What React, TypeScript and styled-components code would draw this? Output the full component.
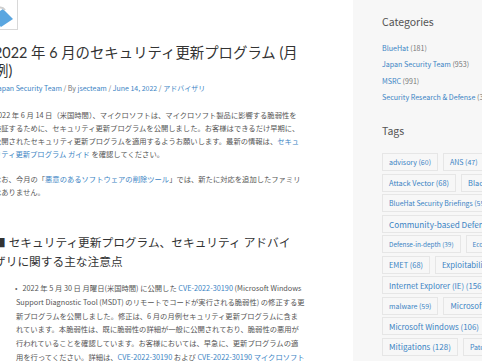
import styled, { createGlobalStyle } from "styled-components";

const GlobalStyle = createGlobalStyle`
  html, body {
    margin: 0;
    padding: 0;
    background: #fff;
    overflow: hidden;
  }
  body {
    font-family: "Noto Sans CJK JP", "Noto Sans", sans-serif;
    color: #555;
  }
`;

const Page = styled.div`
  display: flex;
  width: 620px;
  height: 361px;
  margin-left: -6px;
`;

const Main = styled.main`
  flex: 0 0 307.5px;
  padding-right: 51.5px;
`;

const Thumb = styled.div`
  width: 40px;
  height: 38px;
  margin-top: -10px;
  margin-left: -18px;
  border: 1px solid #d8d8d8;
  background: #fff;
  display: flex;
  align-items: flex-end;
  justify-content: flex-end;
  overflow: hidden;
`;

const Title = styled.h1`
  margin: 14px 0 0;
  font-family: Lato, "Noto Sans CJK JP", sans-serif;
  font-size: 14.4px;
  line-height: 18px;
  font-weight: 400;
  color: #333;
`;

const Meta = styled.div`
  margin-top: 2px;
  font-size: 7px;
  line-height: 12px;
  color: #777;
`;

const A = styled.a`
  color: #3b84c4;
  text-decoration: none;
`;

const Para = styled.p<{ $gap: number }>`
  margin: ${(p) => p.$gap}px 0 0;
  font-size: 7.3px;
  line-height: 13px;
  color: #555;
`;

const Heading = styled.h2`
  margin: 34px 0 0;
  font-family: Lato, "Noto Sans CJK JP", sans-serif;
  font-size: 11.7px;
  line-height: 19px;
  font-weight: 400;
  color: #333;
`;

const List = styled.ul`
  margin: 11px -8px 0 22px;
  padding: 0;
  list-style: none;
  font-size: 7.3px;
  line-height: 13.8px;
  color: #555;
`;

const Item = styled.li`
  &::before {
    content: "•";
    display: inline-block;
    width: 7.5px;
    margin-left: -1px;
    color: #666;
  }
`;

const Side = styled.aside`
  flex: 1 0 auto;
  background: #f7f7f7;
  padding: 14px 29px;
`;

const SideTitle = styled.h3`
  margin: 0;
  font-size: 10.5px;
  line-height: 16px;
  font-weight: 400;
  color: #555;
`;

const CatList = styled.ul`
  list-style: none;
  margin: 10px 0 0;
  padding: 0;
  font-size: 7.1px;
  line-height: 16.3px;
  color: #777;
`;

const TagsTitle = styled(SideTitle)`
  margin-top: 18px;
`;

const TagCloud = styled.div`
  margin-top: 14px;
  display: flex;
  flex-direction: column;
  gap: 2.5px;
`;

const TagRow = styled.div`
  display: flex;
  gap: 5px;
  white-space: nowrap;
`;

const Tag = styled.a<{ $size: number }>`
  display: flex;
  align-items: center;
  height: 18px;
  padding: 0 6px;
  border: 1px solid #e6e6e6;
  box-sizing: border-box;
  color: #3b84c4;
  font-size: ${(p) => p.$size}px;
  text-decoration: none;
`;

const categories = [
  ["BlueHat", "181"],
  ["Japan Security Team", "953"],
  ["MSRC", "991"],
  ["Security Research & Defense", "372"],
];

const tagRows: [string, number][][] = [
  [["advisory (60)", 7], ["ANS (47)", 7], ["Application Compatibility (12)", 7]],
  [["Attack Vector (68)", 7.4], ["Black Hat (45)", 7.4]],
  [["BlueHat Security Briefings (55)", 6.9], ["Browser (30)", 7]],
  [["Community-based Defense (92)", 8.2], ["CVE (20)", 7]],
  [["Defense-in-depth (39)", 6.4], ["EcoStrat (10)", 6.4]],
  [["EMET (68)", 7.4], ["Exploitability (29)", 7.8]],
  [["Internet Explorer (IE) (156)", 7.8], ["JSRT (14)", 7]],
  [["malware (59)", 7], ["Microsoft Office (40)", 7.8]],
  [["Microsoft Windows (106)", 7.9], ["MMPC (28)", 7]],
  [["Mitigations (128)", 8], ["Patch Tuesday (45)", 7]],
];

export default function App() {
  return (
    <>
      <GlobalStyle />
      <Page>
        <Main>
          <Thumb>
            <svg width="30" height="32" viewBox="0 0 30 32">
              <path d="M4 20 L16 12 L26 22 L14 30 Z" fill="#5aa6e0" />
              <path d="M4 20 L14 30 L8 32 L2 26 Z" fill="#a9d3f2" />
              <path d="M6 16 C9 10 15 9 18 13" fill="none" stroke="#cfcfcf" strokeWidth="2" />
            </svg>
          </Thumb>
          <Title>2022 年 6 月のセキュリティ更新プログラム (月例)</Title>
          <Meta>
            <A href="#">Japan Security Team</A> / By <A href="#">jsecteam</A> /{" "}
            <A href="#">June 14, 2022</A> / <A href="#">アドバイザリ</A>
          </Meta>
          <Para $gap={15}>
            2022 年 6 月 14 日（米国時間）、マイクロソフトは、マイクロソフト製品に影響する脆弱性を検証するために、セキュリティ更新プログラムを公開しました。お客様はできるだけ早期に、公開されたセキュリティ更新プログラムを適用するようお願いします。最新の情報は、
            <A href="#">セキュリティ更新プログラム ガイド</A> を確認してください。
          </Para>
          <Para $gap={12}>
            なお、今月の「<A href="#">悪意のあるソフトウェアの削除ツール</A>」では、新たに対応を追加したファミリはありません。
          </Para>
          <Heading>■ セキュリティ更新プログラム、セキュリティ アドバイザリに関する主な注意点</Heading>
          <List>
            <Item>
              2022 年 5 月 30 日 月曜日(米国時間) に公開した <A href="#">CVE-2022-30190</A> (Microsoft Windows
              <br />
              Support Diagnostic Tool (MSDT) のリモートでコードが実行される脆弱性) の修正する更
              <br />
              新プログラムを公開しました。修正は、6 月の月例セキュリティ更新プログラムに含ま
              <br />
              れています。本脆弱性は、既に脆弱性の詳細が一般に公開されており、脆弱性の悪用が
              <br />
              行われていることを確認しています。お客様においては、早急に、更新プログラムの適
              <br />
              用を行ってください。詳細は、<A href="#">CVE-2022-30190</A> および{" "}
              <A href="#">CVE-2022-30190 マイクロソフト</A>
            </Item>
          </List>
        </Main>
        <Side>
          <SideTitle>Categories</SideTitle>
          <CatList>
            {categories.map(([name, count]) => (
              <li key={name}>
                <A href="#">{name}</A> ({count})
              </li>
            ))}
          </CatList>
          <TagsTitle>Tags</TagsTitle>
          <TagCloud>
            {tagRows.map((row, i) => (
              <TagRow key={i}>
                {row.map(([label, size]) => (
                  <Tag key={label} href="#" $size={size}>
                    {label}
                  </Tag>
                ))}
              </TagRow>
            ))}
          </TagCloud>
        </Side>
      </Page>
    </>
  );
}
